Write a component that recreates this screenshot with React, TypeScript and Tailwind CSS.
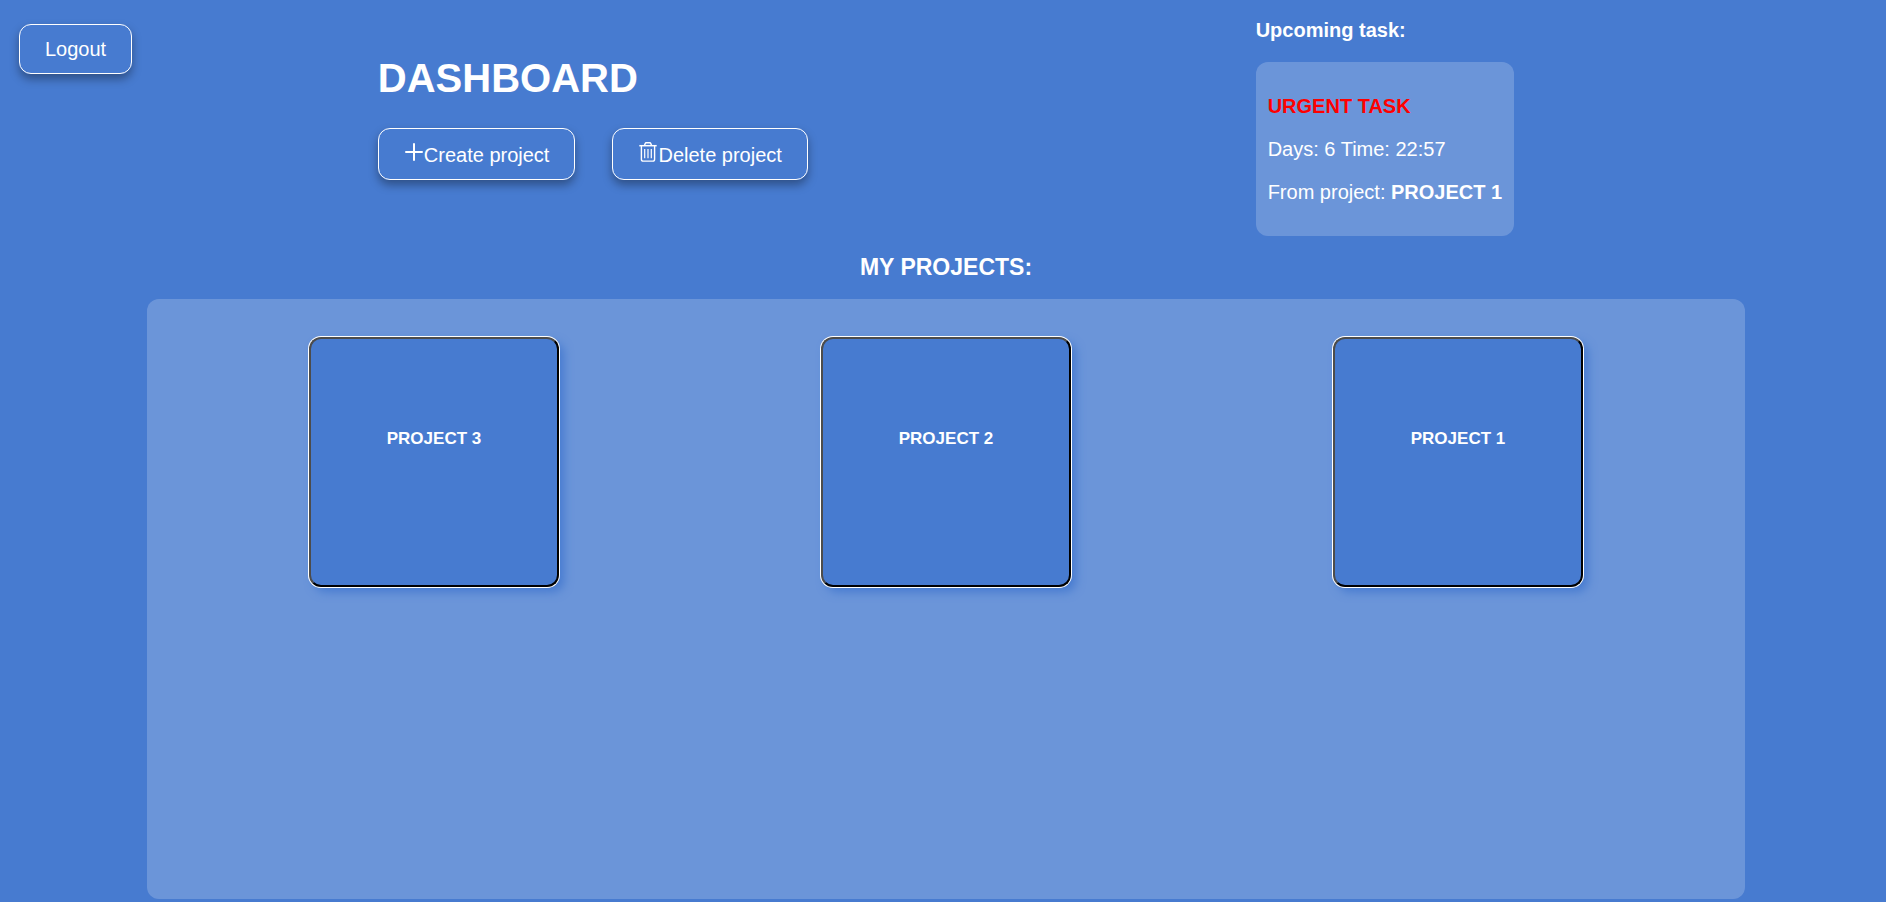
import type { ReactNode } from "react";

const projects = ["PROJECT 3", "PROJECT 2", "PROJECT 1"];

function PlusIcon() {
  return (
    <svg viewBox="0 0 20 20" className="inline size-5 align-baseline" fill="none" stroke="currentColor" aria-hidden="true">
      <path d="M10 2v16M2 10h16" strokeWidth="2" strokeLinecap="round" />
    </svg>
  );
}

function TrashIcon() {
  return (
    <svg viewBox="0 0 20 20" className="inline size-5 align-baseline" fill="none" stroke="currentColor" aria-hidden="true">
      <path d="M1.3 3.7h17.4" strokeWidth="1.5" />
      <path d="M6.4 3.7l.7-2q.3-.9 1.2-.9h3.4q.9 0 1.2.9l.7 2" strokeWidth="1.4" />
      <path d="M3.4 4v13.2q0 1.9 1.9 1.9h9.4q1.9 0 1.9-1.9V4" strokeWidth="1.4" />
      <path d="M6.7 7v9.2M10 7v9.2M13.3 7v9.2" strokeWidth="1.2" />
    </svg>
  );
}

function ActionButton({ children, className = "" }: { children: ReactNode; className?: string }) {
  return (
    <button
      type="button"
      className={`cursor-pointer rounded-xl border border-white px-[25px] pt-[13px] pb-3 text-xl leading-[23px] whitespace-nowrap text-white shadow-[0_5px_10px_rgba(0,0,0,0.35)] ${className}`}
    >
      {children}
    </button>
  );
}

function ProjectCard({ name }: { name: string }) {
  return (
    <button
      type="button"
      className="flex size-[250px] cursor-pointer items-center justify-center rounded-xl border-2 border-t-[#4c4c4c] border-r-black border-b-black border-l-[#4c4c4c] bg-[#477bd0] pb-[46px] text-[17px] leading-5 font-bold shadow-[0_0_0_1px_#fff,5px_5px_10px_#477bd0]"
    >
      {name}
    </button>
  );
}

export default function App() {
  return (
    <div className="min-h-screen bg-[#477bd0] pb-[3px] pl-1.5 font-['Liberation_Sans',Arial,sans-serif] text-white">
      <header className="grid">
        <ActionButton className="z-10 col-start-1 row-start-1 mt-6 ml-[13px] self-start justify-self-start">
          Logout
        </ActionButton>
        <div className="col-start-1 row-start-1 flex justify-evenly gap-[76px] pt-[19px]">
          <div className="pt-9">
            <h1 className="text-[40px] leading-[46px] font-bold">DASHBOARD</h1>
            <div className="mt-[27px] flex gap-[37px]">
              <ActionButton>
                <PlusIcon />
                Create project
              </ActionButton>
              <ActionButton>
                <TrashIcon />
                Delete project
              </ActionButton>
            </div>
          </div>
          <section className="text-xl">
            <h2 className="leading-[23px] font-bold">Upcoming task:</h2>
            <div className="mt-5 flex flex-col gap-[19px] rounded-xl bg-white/20 px-3 py-8 leading-6">
              <p className="font-bold text-[#ff0000]">URGENT TASK</p>
              <p>Days: 6 Time: 22:57</p>
              <p>
                From project: <strong>PROJECT 1</strong>
              </p>
            </div>
          </section>
        </div>
      </header>
      <main className="flex flex-col items-center pt-[18px]">
        <h2 className="text-[23px] leading-[26px] font-bold">MY PROJECTS:</h2>
        <div className="mt-[19px] grid min-h-[600px] w-[85%] grid-cols-3 content-start justify-items-center rounded-xl bg-white/20 px-[31px] py-[38px]">
          {projects.map((name) => (
            <ProjectCard key={name} name={name} />
          ))}
        </div>
      </main>
    </div>
  );
}
